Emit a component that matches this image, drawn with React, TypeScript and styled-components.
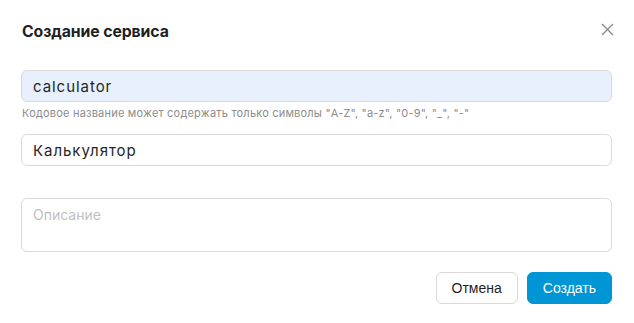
import React from "react";
import styled, { createGlobalStyle } from "styled-components";

const GlobalStyle = createGlobalStyle`
  html, body {
    margin: 0;
    padding: 0;
    background: #ffffff;
  }
  * {
    box-sizing: border-box;
  }
`;

export default function App() {
  return (
    <>
      <GlobalStyle />
      <Modal>
        <Header>
          <Title>Создание сервиса</Title>
          <CloseButton aria-label="Закрыть">
            <svg width="13" height="13" viewBox="0 0 13 13">
              <path
                d="M1 1 L12 12 M12 1 L1 12"
                stroke="#8c8c8c"
                strokeWidth="1.3"
                fill="none"
              />
            </svg>
          </CloseButton>
        </Header>
        <Field $gap={14}>
          <Input $filled defaultValue="calculator" />
          <Hint>
            Кодовое название может содержать только символы "A-Z", "a-z", "0-9", "_", "-"
          </Hint>
        </Field>
        <Field $gap={32}>
          <Input defaultValue="Калькулятор" />
        </Field>
        <Field $gap={20}>
          <TextArea placeholder="Описание" />
        </Field>
        <Footer>
          <Button>Отмена</Button>
          <Button $primary>Создать</Button>
        </Footer>
      </Modal>
    </>
  );
}

const Modal = styled.div`
  width: 634px;
  height: 323px;
  overflow: hidden;
  padding: 18px 22px 0 21px;
  font-family: Inter, "Noto Sans", sans-serif;
  background: #fff;
`;

const Header = styled.div`
  display: flex;
  justify-content: space-between;
  align-items: center;
  height: 26px;
  margin-bottom: 26px;
`;

const Title = styled.h3`
  margin: 0 0 0 1px;
  font-size: 15.8px;
  font-weight: 700;
  color: #1f1f1f;
  letter-spacing: -0.1px;
`;

const CloseButton = styled.button`
  border: none;
  background: none;
  padding: 0;
  margin: -4px -2px 0 0;
  display: flex;
  cursor: pointer;
`;

const Field = styled.div<{ $gap: number }>`
  display: flex;
  flex-direction: column;
  margin-bottom: ${(p) => p.$gap}px;
`;

const Input = styled.input<{ $filled?: boolean }>`
  height: 32px;
  width: 100%;
  border: 1px solid #d9d9d9;
  border-radius: 6px;
  padding: 0 11px;
  font-family: Inter, "Noto Sans", sans-serif;
  font-size: 15px;
  letter-spacing: 0.95px;
  color: #262626;
  background: ${(p) => (p.$filled ? "#e8f0fe" : "#ffffff")};
  outline: none;
`;

const Hint = styled.div`
  font-size: 11px;
  letter-spacing: 0.2px;
  color: #8c8c8c;
  margin: 4px 0 0 1px;
  line-height: 14px;
`;

const TextArea = styled.textarea`
  height: 54px;
  width: 100%;
  resize: none;
  border: 1px solid #d9d9d9;
  border-radius: 6px;
  padding: 7px 11px;
  font-family: Inter, "Noto Sans", sans-serif;
  font-size: 14px;
  color: #1f1f1f;
  outline: none;
  &::placeholder {
    color: #bfbfbf;
  }
`;

const Footer = styled.div`
  display: flex;
  justify-content: flex-end;
  gap: 9px;
`;

const Button = styled.button<{ $primary?: boolean }>`
  height: 32px;
  padding: 0 15px;
  border-radius: 6px;
  font-family: "Liberation Sans", Arial, sans-serif;
  font-size: 14px;
  cursor: pointer;
  border: 1px solid ${(p) => (p.$primary ? "#0096d6" : "#d9d9d9")};
  background: ${(p) => (p.$primary ? "#0096d6" : "#ffffff")};
  color: ${(p) => (p.$primary ? "#ffffff" : "#1f1f1f")};
`;
